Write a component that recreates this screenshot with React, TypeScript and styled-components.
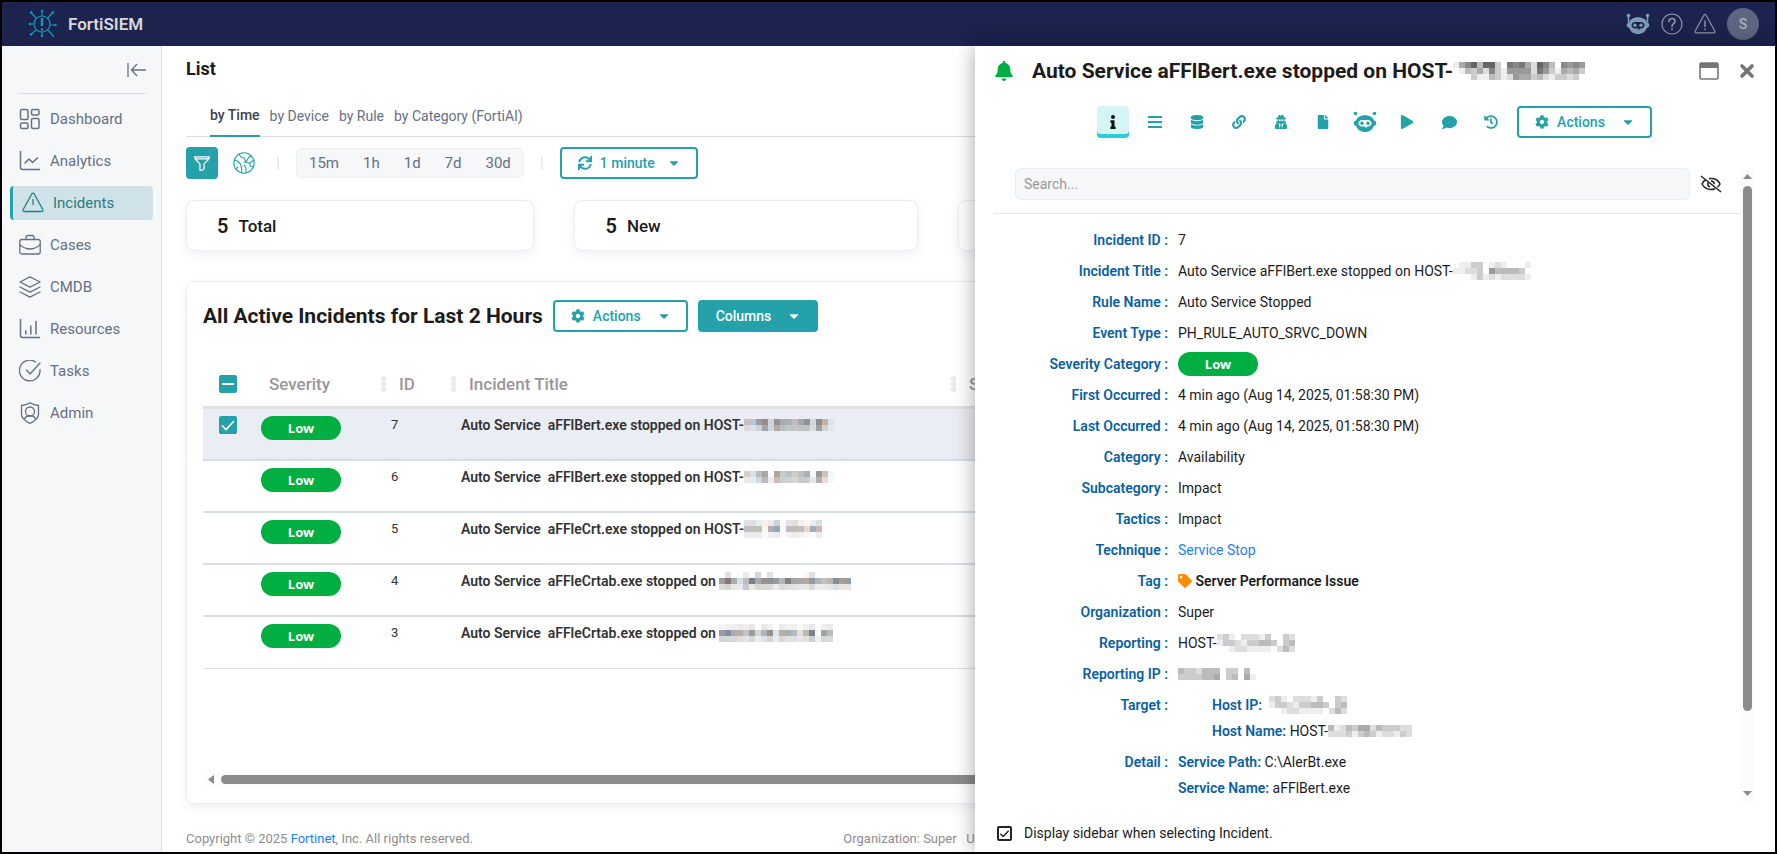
import React from "react";
import styled, { createGlobalStyle, css } from "styled-components";
import {
  FaBell,
  FaCaretDown,
  FaCog,
  FaComment,
  FaDatabase,
  FaFile,
  FaHistory,
  FaInfo,
  FaLink,
  FaPlay,
  FaSync,
  FaTag,
  FaUserSecret,
} from "react-icons/fa";

const teal = "#25a2a9";
const line = "#d8dfe9";
const green = "#00ae42";
const blue = "#0a619f";

const Global = createGlobalStyle`
  *, *::before, *::after { box-sizing: border-box; }
  body {
    margin: 0;
    background: #fff;
    color: #1c1c1c;
    font: 14px/18px Roboto, "Liberation Sans", sans-serif;
  }
  h1, h2, dl, dd, dt, p { margin: 0; }
  button, input { font: inherit; color: inherit; }
  button { background: none; border: 0; padding: 0; cursor: pointer; }
  svg { display: block; flex: none; }
  a { color: #1a82f0; text-decoration: none; }
`;

const Frame = styled.div`
  display: flex;
  flex-direction: column;
  min-height: 100vh;
  border: 2px solid #000;
`;

const TopBar = styled.header`
  display: flex;
  align-items: center;
  height: 44px;
  padding: 0 16px 0 26px;
  background: #1b234e;
  color: #d8d8d8;
`;

const Brand = styled.span`
  flex: 1;
  margin-left: 10px;
  font-size: 17px;
  font-weight: 600;
`;

const TopActions = styled.div`
  display: flex;
  align-items: center;
  gap: 11px;
  color: #8d95a9;
`;

const Avatar = styled.button`
  width: 32px;
  height: 32px;
  border-radius: 50%;
  background: #5c6680;
  color: #a9b0c0;
  font-weight: 500;
`;

const Body = styled.div`
  position: relative;
  display: flex;
  flex: 1;
`;

const Sidebar = styled.nav`
  display: flex;
  flex-direction: column;
  gap: 8px;
  width: 160px;
  flex: none;
  padding: 0 8px;
  background: #f5f7f9;
  border-right: 1px solid ${line};
`;

const Collapse = styled.button`
  display: flex;
  justify-content: flex-end;
  align-items: center;
  height: 48px;
  margin: 0 7px 0 8px;
  color: #667085;
  border-bottom: 1px solid ${line};
`;

const NavItem = styled.a<{ $active?: boolean }>`
  display: flex;
  align-items: center;
  gap: 9px;
  height: 34px;
  padding-left: 9px;
  border-radius: 4px;
  color: #667085;
  font-size: 15px;
  ${(p) =>
    p.$active &&
    css`
      background: #cfe2e7;
      border-left: 3px solid ${teal};
      color: #2a7c82;
    `}
`;

const Main = styled.main`
  display: flex;
  flex-direction: column;
  flex: 1;
  min-width: 0;
  padding: 0 24px;
`;

const PageTitle = styled.h1`
  font-size: 18px;
  line-height: 46px;
  font-weight: 700;
`;

const Tabs = styled.div`
  display: flex;
  gap: 10px;
  height: 45px;
  padding-left: 24px;
  border-bottom: 1px solid ${line};
`;

const Tab = styled.button<{ $active?: boolean }>`
  height: 45px;
  padding-top: ${(p) => (p.$active ? 2 : 4)}px;
  color: ${(p) => (p.$active ? "#3b4350" : "#667085")};
  font-weight: ${(p) => (p.$active ? 500 : 400)};
  border-bottom: 2px solid ${(p) => (p.$active ? teal : "transparent")};
`;

const Toolbar = styled.div`
  display: flex;
  align-items: center;
  height: 32px;
  margin-top: 10px;
`;

const FilterButton = styled.button`
  display: grid;
  place-items: center;
  width: 32px;
  height: 32px;
  border-radius: 4px;
  background: ${teal};
  color: #fff;
`;

const IconButton = styled.button`
  display: grid;
  place-items: center;
`;

const MapButton = styled(IconButton)`
  margin: 0 5px 0 15px;
  color: ${teal};
`;

const Divider = styled.span`
  width: 2px;
  height: 14px;
  margin: 0 17px;
  background: #eceef3;
`;

const Segments = styled.div`
  display: flex;
  align-items: center;
  gap: 24px;
  height: 30px;
  padding: 0 12px;
  border: 1px solid #eceef3;
  border-radius: 6px;
  background: #f5f7f9;
  color: #667085;
  font-size: 15px;
`;

const MenuButton = styled.button<{ $solid?: boolean; $tight?: boolean }>`
  display: flex;
  align-items: center;
  gap: 8px;
  height: 32px;
  padding: 0 15px 0 16px;
  border: 2px solid ${teal};
  border-radius: 4px;
  background: ${(p) => (p.$solid ? teal : "#fff")};
  color: ${(p) => (p.$solid ? "#fff" : teal)};
  font-weight: 500;
  svg:last-child { margin-left: ${(p) => (p.$tight ? 4 : 8)}px; }
`;

const Stats = styled.div`
  display: grid;
  grid-template-columns: 348fr 343fr 376fr 376fr;
  gap: 40px;
  margin-top: 21px;
`;

const cardLook = css`
  border: 1px solid #ebedf2;
  border-radius: 8px;
  background: #fff;
  box-shadow: 0 4px 12px rgba(20, 30, 60, 0.06);
`;

const StatCard = styled.div`
  ${cardLook}
  display: flex;
  align-items: center;
  gap: 10px;
  height: 51px;
  padding-left: 30px;
  font-size: 17px;
  font-weight: 500;
  strong { font-size: 20px; font-weight: 600; }
`;

const TableCard = styled.section`
  ${cardLook}
  display: flex;
  flex-direction: column;
  flex: 1;
  margin-top: 30px;
  padding: 18px 16px 16px;
`;

const CardHead = styled.div`
  display: flex;
  align-items: center;
  gap: 10px;
  height: 32px;
  margin-bottom: 29px;
`;

const CardTitle = styled.h2`
  font-size: 21px;
  font-weight: 700;
`;

const Table = styled.table`
  width: 100%;
  table-layout: fixed;
  border-collapse: separate;
  border-spacing: 0;
`;

const Th = styled.th`
  height: 48px;
  padding: 0;
  text-align: left;
  font-size: 17px;
  font-weight: 500;
  color: #979797;
  border-bottom: 3px solid #e1e1e1;
`;

const ThInner = styled.div<{ $pad?: number }>`
  display: flex;
  align-items: center;
  gap: 11px;
  padding-left: ${(p) => p.$pad ?? 0}px;
`;

const Tr = styled.tr<{ $selected?: boolean }>`
  background: ${(p) => (p.$selected ? "#eaedf3" : "#fff")};
  &:last-child td { border-bottom-width: 1px; }
`;

const Td = styled.td<{ $strong?: boolean }>`
  height: 52px;
  padding: 7px 10px 0;
  vertical-align: top;
  white-space: pre;
  color: #333;
  font-size: ${(p) => (p.$strong ? 14 : 13)}px;
  font-weight: ${(p) => (p.$strong ? 600 : 400)};
  border-bottom: 2px solid ${line};
`;

const CheckCell = styled(Td)`
  padding-left: 16px;
`;

const Pill = styled.span`
  display: flex;
  align-items: center;
  justify-content: center;
  width: 80px;
  height: 24px;
  border-radius: 12px;
  background: ${green};
  color: #fff;
  font: 700 13px/24px "Noto Sans", Roboto, sans-serif;
`;

const BoxWrap = styled.span<{ $solid?: boolean }>`
  display: grid;
  width: ${(p) => (p.$solid ? 18 : 15)}px;
  height: ${(p) => (p.$solid ? 18 : 15)}px;
  color: ${(p) => (p.$solid ? "#fff" : "#222")};
  > * { grid-area: 1 / 1; }
  > svg { place-self: center; pointer-events: none; z-index: 1; }
`;

const Box = styled.input<{ $solid?: boolean }>`
  appearance: none;
  width: 100%;
  height: 100%;
  margin: 0;
  border: 2px solid ${(p) => (p.$solid ? teal : "#222")};
  border-radius: 2px;
  background: ${(p) => (p.$solid ? teal : "#fff")};
`;

const HScroll = styled.div`
  display: flex;
  align-items: center;
  gap: 7px;
  height: 15px;
  margin-top: auto;
  padding-left: 5px;
  background: #fcfcfc;
`;

const Thumb = styled.div<{ $vertical?: boolean }>`
  border-radius: 5px;
  background: #8b8b8b;
  ${(p) =>
    p.$vertical ? "width: 9px; flex: 530; margin-top: 7px;" : "height: 9px; flex: 1;"}
`;

const Footer = styled.footer`
  display: grid;
  grid-template-columns: 42% 1fr;
  height: 48px;
  align-items: center;
  color: #8d8d8d;
  font-size: 13px;
  padding-top: 21px;
  white-space: pre;
`;

const Drawer = styled.aside`
  position: absolute;
  top: 0;
  right: 0;
  bottom: 0;
  display: flex;
  flex-direction: column;
  width: 800px;
  max-width: 100%;
  padding: 0 20px 0 19px;
  background: #fff;
  box-shadow: 0 0 20px rgba(0, 0, 0, 0.35);
`;

const DrawerHead = styled.div`
  display: flex;
  align-items: center;
  height: 49px;
  color: #757575;
`;

const DrawerTitle = styled.h2`
  display: flex;
  flex: 1;
  align-items: center;
  margin-left: 18px;
  color: #1c1c1c;
  font-size: 21px;
  font-weight: 700;
`;

const CloseButton = styled(IconButton)`
  margin-left: 20px;
`;

const DrawerTools = styled.div`
  display: flex;
  justify-content: center;
  gap: 10px;
  margin-top: 11px;
`;

const Tool = styled.button<{ $active?: boolean }>`
  display: grid;
  place-items: center;
  width: 32px;
  height: 32px;
  color: ${teal};
  ${(p) =>
    p.$active &&
    css`
      border-radius: 4px;
      background: #d4f4f6;
      box-shadow: inset 0 -4px #2bcdd6;
      color: #111;
    `}
`;

const DrawerBody = styled.div`
  display: flex;
  height: 634px;
  margin-top: 30px;
`;

const Details = styled.div`
  flex: 1;
`;

const SearchRow = styled.div`
  display: flex;
  align-items: center;
  gap: 10px;
  height: 46px;
  padding: 0 18px 13px 21px;
  border-bottom: 1px solid #e3e3e5;
`;

const Search = styled.input`
  flex: 1;
  height: 32px;
  padding: 0 8px;
  border: 1px solid #e9ecf2;
  border-radius: 6px;
  background: #f5f7f9;
  &::placeholder { color: #989898; opacity: 1; }
`;

const Fields = styled.dl`
  display: grid;
  grid-template-columns: 174px 1fr;
  gap: 5px 10px;
  padding-top: 13px;
  line-height: 26px;
  dt { color: ${blue}; font-weight: 600; text-align: right; }
  b { color: ${blue}; font-weight: 600; }
`;

const Value = styled.div<{ $indent?: boolean; $strong?: boolean }>`
  display: flex;
  align-items: center;
  height: 26px;
  padding-left: ${(p) => (p.$indent ? 34 : 0)}px;
  font-weight: ${(p) => (p.$strong ? 600 : 400)};
  white-space: pre;
`;

const VScroll = styled.div`
  display: flex;
  flex-direction: column;
  align-items: center;
  width: 15px;
  padding: 6px 0;
  background: #fcfcfc;
`;

const TrackRest = styled.div`
  flex: 81;
`;

const DrawerFoot = styled.label`
  display: flex;
  align-items: center;
  gap: 12px;
  height: 50px;
  padding: 12px 0 0 3px;
`;

const Row = styled.span`
  display: inline-flex;
  align-items: center;
`;

/* Pixelated redaction: every row is a list of hex colours. */
const Mosaic = ({ rows, cell = 6 }: { rows: string[]; cell?: number }) => {
  const grid = rows.map((r) => r.split(" "));
  return (
    <svg
      width={grid[0].length * cell}
      height={grid.length * cell}
      shapeRendering="crispEdges"
      aria-hidden="true"
    >
      {grid.map((r, y) =>
        r.map((c, x) => (
          <rect key={`${x}-${y}`} x={x * cell} y={y * cell} width={cell} height={cell} fill={`#${c}`} />
        ))
      )}
    </svg>
  );
};

const grays = (s: string) =>
  s
    .split("")
    .map((c) => c + c + c)
    .join(" ");

const hostSelected = [
  "c8c0b8 b8c6d6 9a9ca4 968a8a ccd4e0 98908c a8acb2 a8b0ba c0bcc0 a4a8ae 8e9298 d0d8e0 8a8c90 c0b0a8 d8e4ea",
  "dcdad6 d8e0ea ccd0dc a4a4a8 d0d6e0 b4aaa4 b8c0c4 c0c4c6 c4c4c6 bcc4c8 c0c4c8 d8dadc a0a0a4 d4d0cc dce8ee",
];
const hostB = [
  "d8cec6 d4e0ea babcc0 aea4a8 f8fcff b0a6a0 c8cacc bcc2c4 d0ccc6 bcc0c4 acb0b4 f4f8fa 9a9a9e d0c2ba f0f8fc",
  "ece6e0 e4ecf4 d4d6dc bab8bc ececec c8bcb4 c8d0d4 ced2d4 d8d8d8 c8cacc cccccc e8e8e6 b0b0b0 ecdcd4 f2faff",
];
const hostC = [
  "dde1e2 e0e0e4 e8eef0 f4f2ea ececf0 d0d2d6 fcfcff e4e4e6 e0dcdc f0f0f0 fff6ee eceef4 d8e0e0",
  "bcc2c6 c0c0bc c0c0bc f8f8ea b4acb0 8ea8bc fafafa c0bcc4 c0c0b4 c0bcc8 ecd8c6 9eaebc c6b6b8",
  "ececec f0eae8 ececea f8fcff eef0f8 ececec fcfcfc f2f2f2 ececec f2f2f6 fcf6f2 f4fafe ececec",
];
const hostD = [
  "fff e0e0e6 fff fff e8eaee fff d4d6d8 fff e0e2e4 fff fff fff fff fff fcf6f0 dae0e8 fff fff fff fff fff fff",
  "a0a0a2 8a7678 a8acaa d8dce4 bcbcc2 7e7e86 a6aab0 9c908c 8c929c a09a96 b0b8bc 808086 a4a4a4 a8a8ac b4a89c 9098a2 b0b4bc c4c2be bcb8b0 848e9e b09c84 8ca0ae",
  "dcdedc d8d4d4 ece6e2 e8eef4 c8c8d2 ece8e4 d8dada ded8d4 dcdcdc ececec dcdcdc e0e0e0 e6e2e0 e8e8e8 ece6e0 d6dade eeeeee ececec e8e8e8 dce0ea ece6e0 e0e8ee",
];
const hostE = [
  "f4f4f4 f0f0f0 f0f0f0 ececec f0ecf0 e8e8e8 fff e8e8ec f0f0f0 fff e8ecec f0f0f0 f0f0f0 f8f8f8 f0f0f0 e8e8ec fff f0f0f0 ececec",
  "9c9c9e 848c9c a8b0b4 b8aca4 c4c4cc 9c9a9c d4d4d4 b0b4b8 9c9088 dce8f0 b8b0a4 a4b0b8 b0bcc0 e4e0e0 b8bab8 80808c f4fcfc a8a4a0 b8bcb8",
  "d0d4d8 d4d8d8 d8d8d8 e4dcd8 e0e4ec d8d8d8 ececec dce0e8 d4d4d4 e8ecf0 d8d8d8 e0e0dc dce0e4 e8e4e8 e0e0e0 d0d0d0 f0f0f0 d8d8d8 d8dcd8",
];
const titleMask = [
  grays("ea86b66cf787ad68bf8989"),
  grays("febcad8ce9999d79ceabac"),
  grays("fffceebced9aacbdeccdcf"),
];
const titleIpMask = [grays("feeccfedefffe"), grays("eeddcf9bbbbcfcd"), grays("fffecededdddece")].map((r) =>
  r.split(" ").slice(0, 13).join(" ")
);
const hostMask = [grays("dcefdddecffcd"), grays("eccdeccbbcfcb"), grays("ffeddeeeefdbd")];
const ipShort = [grays("bccdbbbfccfbf"), grays("ccccbbafcbfae")];
const nameMask = [grays("bedbcaadbcccdd"), grays("dddcecbceddecd")];

/* Icons */
const Stroke = ({
  size = 22,
  w = 1.3,
  children,
}: {
  size?: number;
  w?: number;
  children: React.ReactNode;
}) => (
  <svg
    width={size}
    height={size}
    viewBox="0 0 22 22"
    fill="none"
    stroke="currentColor"
    strokeWidth={w}
    strokeLinecap="round"
    strokeLinejoin="round"
    aria-hidden="true"
  >
    {children}
  </svg>
);

const Logo = () => (
  <svg width="30" height="30" viewBox="0 0 30 30" fill="none" stroke="#159ab8" strokeWidth="1.2" aria-hidden="true">
    <circle cx="14" cy="15" r="8" />
    <path d="M14 7V2M14 23v5M6 15H2M22 16h5M8 9 3 3.500M20 9l5-6M8 21l-5 4.500M20 21l6 7" />
    <path d="M14 9v8M14 19.500v2" strokeWidth="2.400" />
    <g fill="#159ab8" stroke="none">
      <circle cx="3" cy="3.500" r="1.300" />
      <circle cx="25" cy="3.500" r="1.300" />
      <circle cx="3" cy="25.500" r="1.300" />
      <circle cx="2" cy="15" r="1.200" />
      <circle cx="27.500" cy="16" r="1.200" />
      <circle cx="14" cy="2" r="1.200" />
      <circle cx="14" cy="27" r="1.200" />
    </g>
  </svg>
);

const Bot = ({ color, face, antennae }: { color: string; face: string; antennae?: boolean }) => (
  <svg width="24" height="22" viewBox="0 0 24 22" fill={color} aria-hidden="true">
    <circle cx="2.500" cy="2.500" r="1.800" />
    <circle cx="21.500" cy="2.500" r="1.800" />
    {antennae && <path d="M1.700 2.500h1.600v7H1.700zM20.700 2.500h1.600v7h-1.600z" />}
    <path d="M12 4.200c5 0 8 2.300 9 5.300 1.500.3 2.300 1.300 2.300 2.700s-.9 2.400-2.500 2.700c-1.300 3.700-4.300 6-8.800 6s-7.500-2.300-8.800-6C1.600 14.600.7 13.600.7 12.200s.8-2.400 2.300-2.700c1-3 4-5.300 9-5.300z" />
    <path
      fill={face}
      d="M9 9h6c2 0 3.500 1.300 3.500 3.200S17 15.400 15 15.400h-.8L12.500 17.500v-2.100H9c-2 0-3.500-1.300-3.500-3.200S7 9 9 9z"
    />
    <circle cx="9" cy="12.200" r="1.700" />
    <circle cx="15" cy="12.200" r="1.700" />
  </svg>
);

const icons: Record<string, React.ReactNode> = {
  Dashboard: (
    <Stroke w={1.5}>
      <rect x="1.500" y="1.500" width="7.500" height="10" rx="1.500" />
      <rect x="12.500" y="1.500" width="7.500" height="5.500" rx="1.500" />
      <rect x="1.500" y="15" width="7.500" height="5.500" rx="1.500" />
      <rect x="12.500" y="10.500" width="7.500" height="10" rx="1.500" />
    </Stroke>
  ),
  Analytics: (
    <Stroke w={1.5}>
      <path d="M1.500 1.500v16q0 2 2 2h17M6 13l4-4 3.500 3.500L18.500 8" />
    </Stroke>
  ),
  Incidents: (
    <Stroke>
      <path d="M9.600 2.200 1.200 17.500q-.9 2 1.200 2h17.200q2.100 0 1.200-2L12.400 2.200q-1.400-2-2.800 0zM11 7.500v5" />
    </Stroke>
  ),
  Cases: (
    <Stroke>
      <rect x="0.800" y="5.500" width="20.400" height="14.500" rx="2" />
      <path d="M7 5.500v-2q0-2 2-2h4q2 0 2 2v2M1 11q5 4 10 4t10-4" />
    </Stroke>
  ),
  CMDB: (
    <Stroke>
      <path d="M11 .8 21 6l-10 5.200L1 6zM1 11l10 5.200L21 11M1 16l10 5.200L21 16" />
    </Stroke>
  ),
  Resources: (
    <Stroke w={1.5}>
      <path d="M1.500 1.500v16q0 2 2 2h17M6.800 16v-3M11.800 16V8M17 16V3.500" />
    </Stroke>
  ),
  Tasks: (
    <Stroke>
      <path d="M21 9.500A10.300 10.300 0 1 1 16.500 2M7.500 10l3.500 4 10-11" />
    </Stroke>
  ),
  Admin: (
    <Stroke>
      <path d="M11 .8q4 2.400 8.500 2.700V12c0 5-4.500 7.500-8.500 9.300C7 19.500 2.500 17 2.500 12V3.500Q7 3.200 11 .8zM5.500 17.500c1-5 10-5 11 0" />
      <circle cx="11" cy="9.500" r="4.500" />
    </Stroke>
  ),
};

const Globe = () => (
  <Stroke w={1.1}>
    <circle cx="11" cy="11" r="10.200" />
    <path d="M6 2.200 8 5l3 1 2 4 3-5 2.500-1M1.500 8l3 1 3 3 1 4 .5 4.500M20.800 8l-4 3 .2 3 3 1M13 20.500V16l-2-3M3 17l2-2M11 10l5 1" />
  </Stroke>
);

const Funnel = () => (
  <Stroke size={18} w={1.5}>
    <path d="M2 3.500h18q0 2-1.500 3.500L13.500 12v6l-2.500 2h-2.500v-8L3.500 7Q2 5.500 2 3.500zM3.500 6h15" />
  </Stroke>
);

const Check = ({ size, w = 2 }: { size: number; w?: number }) => (
  <svg width={size} height={size} viewBox="0 0 16 16" fill="none" stroke="currentColor" strokeWidth={w}>
    <path d="m2 8.500 4 4L14 4" />
  </svg>
);

const Dots = () => (
  <svg width="7" height="18" viewBox="0 0 7 18" fill="#ebebeb" aria-hidden="true">
    <circle cx="2.700" cy="3.500" r="2.700" />
    <circle cx="2.700" cy="9" r="2.700" />
    <circle cx="2.700" cy="14.500" r="2.700" />
  </svg>
);

const Arrow = ({ d, w, h }: { d: string; w: number; h: number }) => (
  <svg width={w} height={h} fill="#8b8b8b" aria-hidden="true">
    <path d={d} />
  </svg>
);

const tableRows = [
  { id: 7, exe: "aFFlBert.exe", host: "HOST-", mask: hostSelected, selected: true },
  { id: 6, exe: "aFFlBert.exe", host: "HOST-", mask: hostB },
  { id: 5, exe: "aFFleCrt.exe", host: "HOST-", mask: hostC },
  { id: 4, exe: "aFFleCrtab.exe", host: "", mask: hostD },
  { id: 3, exe: "aFFleCrtab.exe", host: "", mask: hostE },
];

const tools: [string, React.ReactNode][] = [
  ["Details", <FaInfo size={14} />],
  [
    "Events",
    <svg width="14" height="14" fill="currentColor">
      <path d="M0 1h14v2H0zM0 6h14v2H0zM0 11h14v2H0z" />
    </svg>,
  ],
  ["Context", <FaDatabase size={14} />],
  ["Related", <FaLink size={14} />],
  ["Threat", <FaUserSecret size={14} />],
  ["Report", <FaFile size={14} />],
  ["FortiAI", <Bot color={teal} face="#fff" />],
  ["Run", <FaPlay size={14} />],
  ["Comments", <FaComment size={15} />],
  ["History", <FaHistory size={14} />],
];

const Field = ({ label, children }: { label: string; children: React.ReactNode }) => (
  <>
    <dt>{label} :</dt>
    <dd>{children}</dd>
  </>
);

export default function App() {
  return (
    <Frame>
      <Global />
      <TopBar>
        <Logo />
        <Brand>FortiSIEM</Brand>
        <TopActions>
          <IconButton aria-label="FortiAI">
            <Bot color="#7f9dba" face="#1b234e" antennae />
          </IconButton>
          <IconButton aria-label="Help">
            <Stroke w={1.2}>
              <circle cx="11" cy="11" r="10" />
              <path d="M8 8.500q0-3 3-3t3 2.800q0 1.500-1.500 2.500T11 13.500M11 16v.5" strokeWidth="1.700" />
            </Stroke>
          </IconButton>
          <IconButton aria-label="Alerts">
            <Stroke w={1.2}>
              <path d="M10 2 1.200 18q-.6 1.800 1.200 1.800h17.200q1.800 0 1.200-1.800L12 2q-1-1.500-2 0z" />
              <path d="M11 8v5.500M11 16v.5" strokeWidth="1.500" />
            </Stroke>
          </IconButton>
          <Avatar>S</Avatar>
        </TopActions>
      </TopBar>

      <Body>
        <Sidebar>
          <Collapse aria-label="Collapse menu">
            <svg width="19" height="16" fill="none" stroke="currentColor" strokeWidth="1.300">
              <path d="M1 1v14M19 8H5M10 2 4.500 8l5.500 6" />
            </svg>
          </Collapse>
          {Object.keys(icons).map((name) => (
            <NavItem key={name} href="#" $active={name === "Incidents"}>
              {icons[name]}
              {name}
            </NavItem>
          ))}
        </Sidebar>

        <Main>
          <PageTitle>List</PageTitle>
          <Tabs>
            <Tab $active>by Time</Tab>
            <Tab>by Device</Tab>
            <Tab>by Rule</Tab>
            <Tab>by Category (FortiAI)</Tab>
          </Tabs>
          <Toolbar>
            <FilterButton aria-label="Filter">
              <Funnel />
            </FilterButton>
            <MapButton aria-label="Map">
              <Globe />
            </MapButton>
            <Divider />
            <Segments>
              {["15m", "1h", "1d", "7d", "30d"].map((t) => (
                <button key={t}>{t}</button>
              ))}
            </Segments>
            <Divider />
            <MenuButton $tight>
              <FaSync size={14} />
              1 minute
              <FaCaretDown size={14} />
            </MenuButton>
          </Toolbar>

          <Stats>
            <StatCard>
              <strong>5</strong>Total
            </StatCard>
            <StatCard>
              <strong>5</strong>New
            </StatCard>
            <StatCard />
            <StatCard />
          </Stats>

          <TableCard>
            <CardHead>
              <CardTitle>All Active Incidents for Last 2 Hours</CardTitle>
              <MenuButton>
                <FaCog size={14} />
                Actions
                <FaCaretDown size={14} />
              </MenuButton>
              <MenuButton $solid>
                Columns
                <FaCaretDown size={14} />
              </MenuButton>
            </CardHead>
            <Table>
              <colgroup>
                <col style={{ width: 48 }} />
                <col style={{ width: 130 }} />
                <col style={{ width: 70 }} />
                <col style={{ width: 500 }} />
                <col />
              </colgroup>
              <thead>
                <tr>
                  <Th>
                    <ThInner $pad={16}>
                      <BoxWrap $solid>
                        <Box $solid type="checkbox" aria-label="Select all" />
                        <svg width="12" height="2">
                          <path d="M0 0h12v2H0z" fill="#fff" />
                        </svg>
                      </BoxWrap>
                    </ThInner>
                  </Th>
                  <Th>
                    <ThInner $pad={18}>Severity</ThInner>
                  </Th>
                  {["ID", "Incident Title", "Status"].map((h) => (
                    <Th key={h}>
                      <ThInner>
                        <Dots />
                        {h}
                      </ThInner>
                    </Th>
                  ))}
                </tr>
              </thead>
              <tbody>
                {tableRows.map((r) => (
                  <Tr key={r.id} $selected={r.selected}>
                    <CheckCell>
                      {r.selected && (
                        <BoxWrap $solid>
                          <Box $solid type="checkbox" defaultChecked aria-label="Select incident 7" />
                          <Check size={16} w={1.7} />
                        </BoxWrap>
                      )}
                    </CheckCell>
                    <Td>
                      <Pill>Low</Pill>
                    </Td>
                    <Td>{r.id}</Td>
                    <Td $strong>
                      <Row>
                        {`Auto Service  ${r.exe} stopped on ${r.host}`}
                        <Mosaic rows={r.mask} />
                      </Row>
                    </Td>
                    <Td />
                  </Tr>
                ))}
              </tbody>
            </Table>
            <HScroll>
              <Arrow d="M6 0v9L0 4.500z" w={6} h={9} />
              <Thumb />
            </HScroll>
          </TableCard>

          <Footer>
            <p>
              Copyright © 2025 <a href="#">Fortinet</a>, Inc. All rights reserved.
            </p>
            <p>{"Organization: Super   User:"}</p>
          </Footer>
        </Main>

        <Drawer>
          <DrawerHead>
            <FaBell size={20} color={green} />
            <DrawerTitle>
              Auto Service aFFlBert.exe stopped on HOST-
              <Mosaic rows={titleMask} />
            </DrawerTitle>
            <IconButton aria-label="Maximize">
              <svg width="20" height="18" fill="none" stroke="currentColor" strokeWidth="1.600">
                <rect x="1" y="1" width="18" height="16" rx="1" />
                <path d="M1 3.500h18" strokeWidth="5" />
              </svg>
            </IconButton>
            <CloseButton aria-label="Close">
              <svg width="16" height="16" stroke="currentColor" strokeWidth="3.600" strokeLinecap="round">
                <path d="m3 3 10 10M13 3 3 13" />
              </svg>
            </CloseButton>
          </DrawerHead>
          <DrawerTools>
            {tools.map(([name, icon], i) => (
              <Tool key={name} aria-label={name} $active={i === 0}>
                {icon}
              </Tool>
            ))}
            <MenuButton>
              <FaCog size={14} />
              Actions
              <FaCaretDown size={14} />
            </MenuButton>
          </DrawerTools>

          <DrawerBody>
            <Details>
              <SearchRow>
                <Search placeholder="Search..." aria-label="Search" />
                <IconButton aria-label="Hide empty fields">
                  <svg width="22" height="18" fill="none" stroke="#222" strokeWidth="1.500">
                    <path d="M1 1l20 16M6 4.500Q3.500 6 2 9q3 5.500 9 5.500 2 0 4-.8M9 3.600Q17 2.500 20 9q-.8 1.800-2.500 3.200M8 7.500q-1 3 2 4.500M11 6q3 .2 3.300 3.300" />
                  </svg>
                </IconButton>
              </SearchRow>
              <Fields>
                <Field label="Incident ID">7</Field>
                <Field label="Incident Title">
                  <Value>
                    Auto Service aFFlBert.exe stopped on HOST-
                    <Mosaic rows={titleIpMask} />
                  </Value>
                </Field>
                <Field label="Rule Name">Auto Service Stopped</Field>
                <Field label="Event Type">PH_RULE_AUTO_SRVC_DOWN</Field>
                <Field label="Severity Category">
                  <Value>
                    <Pill>Low</Pill>
                  </Value>
                </Field>
                <Field label="First Occurred">4 min ago (Aug 14, 2025, 01:58:30 PM)</Field>
                <Field label="Last Occurred">4 min ago (Aug 14, 2025, 01:58:30 PM)</Field>
                <Field label="Category">Availability</Field>
                <Field label="Subcategory">Impact</Field>
                <Field label="Tactics">Impact</Field>
                <Field label="Technique">
                  <a href="#">Service Stop</a>
                </Field>
                <Field label="Tag">
                  <Value $strong>
                    <FaTag size={14} color="#ff8c00" />
                    {" Server Performance Issue"}
                  </Value>
                </Field>
                <Field label="Organization">Super</Field>
                <Field label="Reporting">
                  <Value>
                    HOST-
                    <Mosaic rows={hostMask} />
                  </Value>
                </Field>
                <Field label="Reporting IP">
                  <Value>
                    <Mosaic rows={ipShort} />
                  </Value>
                </Field>
                <Field label="Target">
                  <Value $indent>
                    <b>{"Host IP:  "}</b>
                    <Mosaic rows={hostMask} />
                  </Value>
                  <Value $indent>
                    <b>Host Name:</b>
                    {" HOST-"}
                    <Mosaic rows={nameMask} />
                  </Value>
                </Field>
                <Field label="Detail">
                  <Value>
                    <b>Service Path:</b>
                    {" C:\\AlerBt.exe"}
                  </Value>
                  <Value>
                    <b>Service Name:</b>
                    {" aFFlBert.exe"}
                  </Value>
                </Field>
              </Fields>
            </Details>
            <VScroll>
              <Arrow d="M0 5 4.500 0 9 5z" w={9} h={5} />
              <Thumb $vertical />
              <TrackRest />
              <Arrow d="M0 0h9L4.500 5z" w={9} h={5} />
            </VScroll>
          </DrawerBody>
          <DrawerFoot>
            <BoxWrap>
              <Box type="checkbox" defaultChecked />
              <Check size={11} />
            </BoxWrap>
            Display sidebar when selecting Incident.
          </DrawerFoot>
        </Drawer>
      </Body>
    </Frame>
  );
}
